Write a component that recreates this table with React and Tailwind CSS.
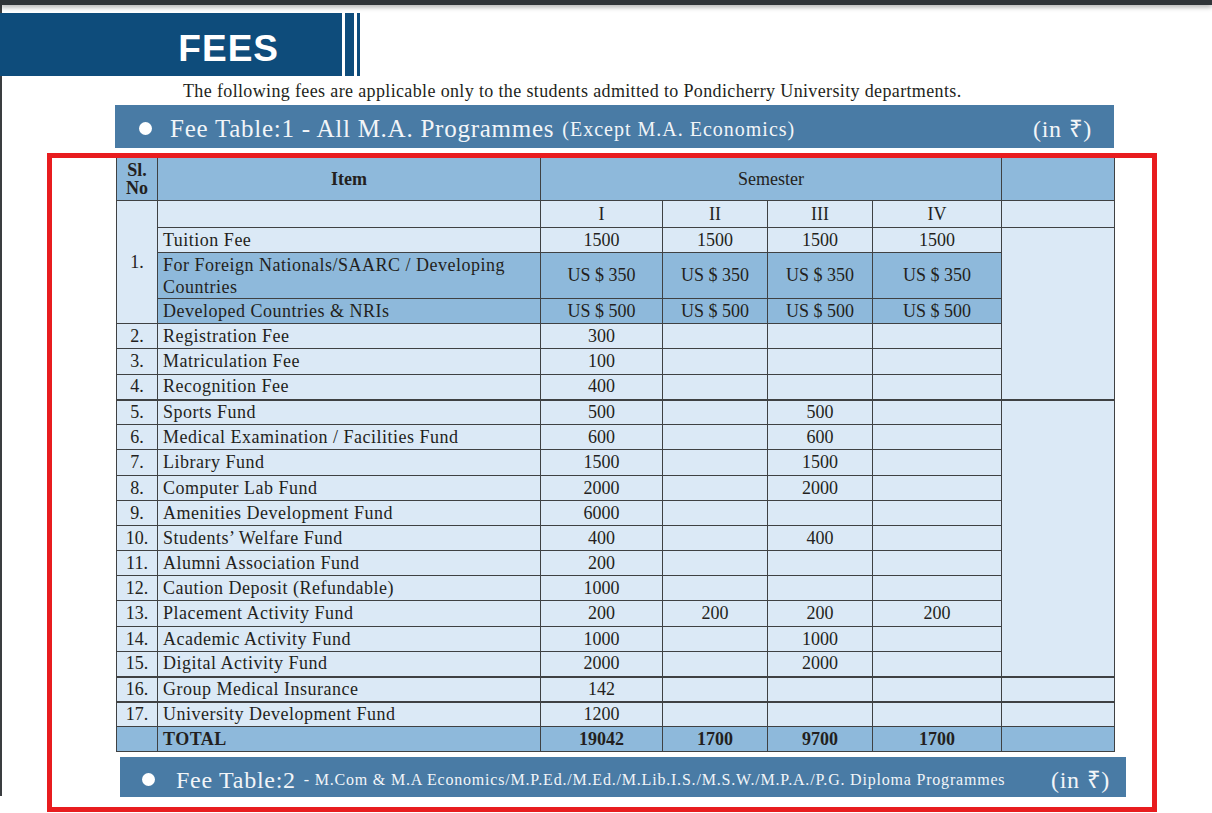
import React from "react";

// Fee rows 2..17 (row 1 is the tuition block, built separately)
const feeRows = [
  { sl: "2.", item: "Registration Fee", v: ["300", "", "", ""], h: "h-[25px]" },
  { sl: "3.", item: "Matriculation Fee", v: ["100", "", "", ""], h: "h-[26px]" },
  { sl: "4.", item: "Recognition Fee", v: ["400", "", "", ""], h: "h-[25px]" },
  { sl: "5.", item: "Sports Fund", v: ["500", "", "500", ""], h: "h-[25px]" },
  { sl: "6.", item: "Medical Examination / Facilities Fund", v: ["600", "", "600", ""], h: "h-[25px]" },
  { sl: "7.", item: "Library Fund", v: ["1500", "", "1500", ""], h: "h-[26px]" },
  { sl: "8.", item: "Computer Lab Fund", v: ["2000", "", "2000", ""], h: "h-[25px]" },
  { sl: "9.", item: "Amenities Development Fund", v: ["6000", "", "", ""], h: "h-[25px]" },
  { sl: "10.", item: "Students’ Welfare Fund", v: ["400", "", "400", ""], h: "h-[25px]" },
  { sl: "11.", item: "Alumni Association Fund", v: ["200", "", "", ""], h: "h-[25px]" },
  { sl: "12.", item: "Caution Deposit (Refundable)", v: ["1000", "", "", ""], h: "h-[25px]" },
  { sl: "13.", item: "Placement Activity Fund", v: ["200", "200", "200", "200"], h: "h-[26px]" },
  { sl: "14.", item: "Academic Activity Fund", v: ["1000", "", "1000", ""], h: "h-[25px]" },
  { sl: "15.", item: "Digital Activity Fund", v: ["2000", "", "2000", ""], h: "h-[25px]" },
  { sl: "16.", item: "Group Medical Insurance", v: ["142", "", "", ""], h: "h-[25px]" },
  { sl: "17.", item: "University Development Fund", v: ["1200", "", "", ""], h: "h-[25px]" },
];

const cell = "border border-[#3f4143] p-0 align-middle";
const light = "bg-[#dbe9f6]";
const dark = "bg-[#8eb9db]";
const itemText = "pl-[5px] tracking-[0.5px]";

const Bullet = () => (
  <span className="inline-block w-[13px] h-[13px] rounded-full bg-white shrink-0" />
);

export default function App() {
  return (
    <div
      className="relative w-[1212px] h-[813px] bg-white overflow-hidden text-[#231f20]"
      style={{ fontFamily: '"Liberation Serif", "Times New Roman", serif' }}
    >
      {/* viewer top bar */}
      <div className="relative z-10 h-[5px] bg-[#303438] shadow-[0_2px_5px_rgba(0,0,0,0.35)]" />

      {/* page */}
      <div className="h-[791px] border-l-2 border-[#3a3d40] pt-[8px]">
        {/* FEES banner */}
        <div className="flex h-[63px] -ml-[2px]">
          <div className="w-[342px] bg-[#0e4c7b] flex items-center justify-end pr-[63px] pt-[7px]">
            <span className="text-white font-bold text-[37px] tracking-[1px] leading-none font-['Liberation_Sans',Arial,sans-serif]">
              FEES
            </span>
          </div>
          <div className="ml-[3px] w-[9px] bg-[#0e4c7b]" />
          <div className="ml-[3px] w-[3px] bg-[#0e4c7b]" />
        </div>

        <p className="mt-[4px] pl-[181px] h-[22px] leading-[22px] text-[18px] tracking-[0.02em]">
          The following fees are applicable only to the students admitted to Pondicherry University departments.
        </p>

        {/* table 1 title */}
        <div className="mt-[3px] ml-[113px] w-[999px] h-[43px] bg-[#497ba5] flex items-center pt-[4px] pl-[24px] pr-[22px] text-[#f2f5f8]">
          <Bullet />
          <span className="ml-[18px] text-[25px] tracking-[0.03em]">Fee Table:1 - All M.A. Programmes</span>
          <span className="ml-[8px] text-[20px] tracking-[0.05em]">(Except M.A. Economics)</span>
          <span className="ml-auto text-[24px] tracking-[0.03em]">(in ₹)</span>
        </div>

        {/* fee table */}
        <table className="mt-[9px] ml-[114px] w-[998px] border-collapse table-fixed text-[18px] leading-[21px]">
          <colgroup>
            <col className="w-[41px]" />
            <col className="w-[383px]" />
            <col className="w-[122px]" />
            <col className="w-[105px]" />
            <col className="w-[105px]" />
            <col className="w-[129px]" />
            <col className="w-[113px]" />
          </colgroup>
          <tbody>
            <tr className="h-[43px]">
              <td className={`${cell} ${dark} text-center font-bold leading-[18px]`}>
                Sl.
                <br />
                No
              </td>
              <td className={`${cell} ${dark} text-center font-bold`}>Item</td>
              <td colSpan={4} className={`${cell} ${dark} text-center`}>
                Semester
              </td>
              <td className={`${cell} ${dark}`} />
            </tr>
            <tr className="h-[27px]">
              <td rowSpan={4} className={`${cell} ${light} text-center`}>
                1.
              </td>
              <td className={`${cell} ${light}`} />
              {["I", "II", "III", "IV"].map((s) => (
                <td key={s} className={`${cell} ${light} text-center`}>
                  {s}
                </td>
              ))}
              <td className={`${cell} ${light}`} />
            </tr>
            <tr className="h-[25px]">
              <td className={`${cell} ${light} ${itemText}`}>Tuition Fee</td>
              {["1500", "1500", "1500", "1500"].map((s, i) => (
                <td key={i} className={`${cell} ${light} text-center`}>
                  {s}
                </td>
              ))}
              <td rowSpan={6} className={`${cell} ${light}`} />
            </tr>
            <tr className="h-[46px]">
              <td className={`${cell} ${dark} ${itemText} leading-[22px]`}>
                For Foreign Nationals/SAARC / Developing
                <br />
                Countries
              </td>
              {[0, 1, 2, 3].map((i) => (
                <td key={i} className={`${cell} ${dark} text-center`}>
                  US $ 350
                </td>
              ))}
            </tr>
            <tr className="h-[25px]">
              <td className={`${cell} ${dark} ${itemText}`}>Developed Countries &amp; NRIs</td>
              {[0, 1, 2, 3].map((i) => (
                <td key={i} className={`${cell} ${dark} text-center`}>
                  US $ 500
                </td>
              ))}
            </tr>
            {feeRows.map((r) => {
              const thickTop = r.sl === "5." || r.sl === "16." || r.sl === "17.";
              const t = thickTop ? "border-t-2" : "";
              return (
                <tr key={r.sl} className={r.h}>
                  <td className={`${cell} ${t} ${light} text-center`}>{r.sl}</td>
                  <td className={`${cell} ${t} ${light} ${itemText}`}>{r.item}</td>
                  {r.v.map((s, i) => (
                    <td key={i} className={`${cell} ${t} ${light} text-center`}>
                      {s}
                    </td>
                  ))}
                  {r.sl === "5." && <td rowSpan={11} className={`${cell} ${t} ${light}`} />}
                  {(r.sl === "16." || r.sl === "17.") && <td className={`${cell} ${t} ${light}`} />}
                </tr>
              );
            })}
            <tr className="h-[25px] font-bold">
              <td className={`${cell} ${dark}`} />
              <td className={`${cell} ${dark} ${itemText}`}>TOTAL</td>
              {["19042", "1700", "9700", "1700"].map((s, i) => (
                <td key={i} className={`${cell} ${dark} text-center`}>
                  {s}
                </td>
              ))}
              <td className={`${cell} ${dark}`} />
            </tr>
          </tbody>
        </table>

        {/* table 2 title */}
        <div className="mt-[5px] ml-[118px] w-[1006px] h-[40px] bg-[#497ba5] flex items-center pt-[5px] pl-[22px] pr-[16px] text-[#f2f5f8]">
          <Bullet />
          <span className="ml-[21px] text-[24px] tracking-[0.03em]">Fee Table:2</span>
          <span className="ml-[8px] text-[16px] tracking-[0.05em]">
            - M.Com &amp; M.A Economics/M.P.Ed./M.Ed./M.Lib.I.S./M.S.W./M.P.A./P.G. Diploma Programmes
          </span>
          <span className="ml-auto text-[24px] tracking-[0.03em]">(in ₹)</span>
        </div>
      </div>

      {/* red annotation box */}
      <div className="absolute left-[47px] top-[153px] w-[1110px] h-[659px] border-[5px] border-[#e81c1f] pointer-events-none" />
    </div>
  );
}
